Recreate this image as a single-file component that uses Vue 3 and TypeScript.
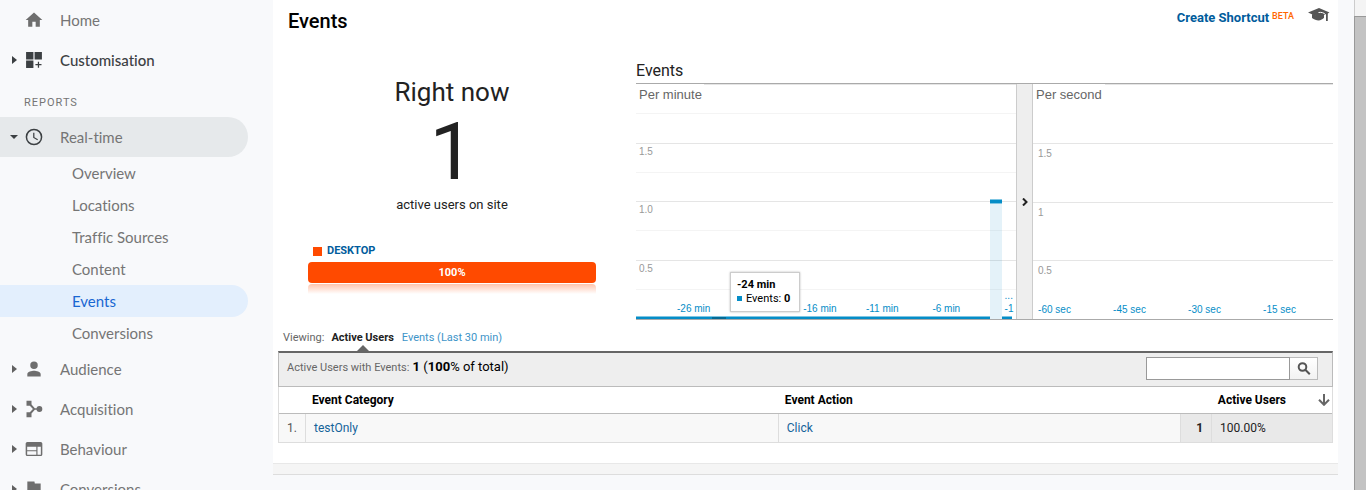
<script setup lang="ts">
interface NavItem {
  label: string
  icon: string
}

interface AxisLabel {
  text: string
  x: number
}

const subItems: string[] = ['Overview', 'Locations', 'Traffic Sources', 'Content', 'Events', 'Conversions']
const activeSub = 'Events'

const reports: NavItem[] = [
  { label: 'Audience', icon: 'M12 12a4.500 4.500 0 1 0 0-9 4.500 4.500 0 0 0 0 9zM12 14c-2.700 0-8 1.300-8 4v3h16v-3c0-2.700-5.300-4-8-4z' },
  { label: 'Acquisition', icon: 'M3 2h6v6H3zM3 16h6v6H3zM7 8l2-1.500 4 4.500h3v2h-3l-4 4.500L7 16l3.700-4zM15 12a3.500 3.500 0 1 1 7 0 3.500 3.500 0 1 1-7 0z' },
  { label: 'Behaviour', icon: 'M4 3.500h16a2 2 0 0 1 2 2v13a2 2 0 0 1-2 2H4a2 2 0 0 1-2-2v-13a2 2 0 0 1 2-2zM3.800 9.200v4.200h11V9.200zM3.800 14.800v4h11v-4zM16.200 9.200v9.600h4V9.200z' },
  { label: 'Conversions', icon: 'M13 5.500L12.500 3H4v19h3v-7h5l.5 2.500H20v-12z' },
]

const minorLines: number[] = [29, 88, 146, 205]
const minuteLines: number[] = [59, 117, 176]
const secondLines: number[] = [59, 118, 176]
const levels: string[] = ['1.5', '1.0', '0.5']
const secondLevels: string[] = ['1.5', '1', '0.5']

const minuteLabels: AxisLabel[] = [
  { text: '-26 min', x: 10.8 },
  { text: '-16 min', x: 44 },
  { text: '-11 min', x: 60.5 },
  { text: '-6 min', x: 78 },
  { text: '-1', x: 97 },
]

const secondLabels: AxisLabel[] = [
  { text: '-60 sec', x: 1.7 },
  { text: '-45 sec', x: 26.7 },
  { text: '-30 sec', x: 51.7 },
  { text: '-15 sec', x: 76.7 },
]
</script>

<template>
  <div class="page">
    <nav class="sidebar">
      <a class="item" href="#">
        <span class="caret"></span>
        <svg class="icon" viewBox="0 0 24 24"><path d="M10 20v-6h4v6h5v-8h3L12 3 2 12h3v8z" /></svg>
        Home
      </a>
      <a class="item dark" href="#">
        <svg class="caret" viewBox="0 0 8 10"><path d="M2 1l5 4-5 4z" /></svg>
        <svg class="icon" viewBox="0 0 24 24"><path d="M2.500 2.500h8.800v8.800H2.500zM12.700 2.500h8.800v8.800h-8.800zM2.500 12.700h8.800v8.800H2.500zM16.600 14h1.500v2.900H21v1.500h-2.900v2.900h-1.500v-2.900h-2.900v-1.500h2.900z" /></svg>
        Customisation
      </a>
      <h2 class="section">REPORTS</h2>
      <a class="item open" href="#">
        <svg class="caret" viewBox="0 0 8 10"><path d="M0 3h8L4 7z" /></svg>
        <svg class="icon" viewBox="0 0 24 24"><path d="M12 2a10 10 0 1 0 0 20 10 10 0 0 0 0-20zM12 20.200a8.200 8.200 0 1 1 0-16.400 8.200 8.200 0 0 1 0 16.400zM12.500 7H11v6l5 3 .8-1.300-4.300-2.500z" /></svg>
        Real-time
      </a>
      <a v-for="s in subItems" :key="s" class="sub" :class="{ active: s === activeSub }" href="#">{{ s }}</a>
      <a v-for="r in reports" :key="r.label" class="item" href="#">
        <svg class="caret" viewBox="0 0 8 10"><path d="M2 1l5 4-5 4z" /></svg>
        <svg class="icon" viewBox="0 0 24 24"><path :d="r.icon" /></svg>
        {{ r.label }}
      </a>
    </nav>

    <main class="main">
      <section class="panel">
        <header class="top">
          <h1>Events</h1>
          <div class="actions">
            <a href="#" class="shortcut">Create Shortcut</a>
            <span class="beta">BETA</span>
            <svg class="cap" viewBox="0 0 22 14">
              <path d="M11 0L0 4.500 11 9.500l7-3.200V13h1.800V5.500l1.700-1z" />
              <path d="M4 6v4c2 1.500 4.500 2.500 6.500 2.500s4.500-1.500 5.500-2.700V6l-5 2.500z" />
              <path d="M10.500 4.500c3-.5 5.500.3 6.800 2v3.500" stroke="#fff" stroke-width="1" fill="none" />
            </svg>
          </div>
        </header>

        <div class="overview">
          <div class="now">
            <div class="now-title">Right now</div>
            <div class="now-count">1</div>
            <div class="now-note">active users on site</div>
            <div class="legend"><i></i>DESKTOP</div>
            <div class="share">100%</div>
            <div class="reflection"></div>
          </div>

          <div class="charts">
            <h3>Events</h3>
            <div class="plots">
              <div class="plot minute">
                <svg width="100%" height="235">
                  <rect class="faint" x="18%" y="0" width="82%" height="1" />
                  <rect v-for="y in minorLines" :key="y" class="minor" x="0" :y="y" width="100%" height="1" />
                  <rect v-for="y in minuteLines" :key="y" class="major" x="0" :y="y" width="100%" height="1" />
                  <text class="name" x="3" y="15">Per minute</text>
                  <text v-for="(l, i) in levels" :key="l" class="level" x="3" :y="minuteLines[i] + 12">{{ l }}</text>
                  <text v-for="l in minuteLabels" :key="l.text" class="tick" :x="l.x + '%'" y="228">{{ l.text }}</text>
                  <text class="tick" x="97%" y="215">...</text>
                  <rect class="edge" x="0" y="232" width="99%" height="1" />
                  <rect class="line" x="0" y="233" width="99%" height="2" />
                  <rect class="hover" x="20%" y="233" width="3.700%" height="2" />
                  <rect fill="#fff" x="93.200%" y="232" width="3.100%" height="3" />
                  <rect class="bar" x="93.200%" y="117" width="3.100%" height="118" />
                  <rect class="edge" x="93.200%" y="115" width="3.100%" height="5" />
                  <rect class="line" x="93.200%" y="116" width="3.100%" height="3" />
                </svg>
                <div class="tip">
                  <b>-24 min</b>
                  <span><i></i>Events: <b>0</b></span>
                </div>
              </div>
              <button class="toggle" aria-label="Collapse chart">
                <svg viewBox="0 0 6 8"><path d="M1 .5L4.500 4 1 7.500" /></svg>
              </button>
              <div class="plot second">
                <svg width="100%" height="235">
                  <rect class="faint" x="24%" y="0" width="76%" height="1" />
                  <rect v-for="y in secondLines" :key="y" class="major" x="0" :y="y" width="100%" height="1" />
                  <text class="name" x="3" y="15">Per second</text>
                  <text v-for="(l, i) in secondLevels" :key="l" class="level" x="5" :y="secondLines[i] + 14">{{ l }}</text>
                  <text v-for="l in secondLabels" :key="l.text" class="tick" :x="l.x + '%'" y="229">{{ l.text }}</text>
                </svg>
              </div>
            </div>
          </div>
        </div>

        <div class="report">
          <div class="tabs">
            <span class="muted">Viewing:</span>
            <a href="#" class="tab current">Active Users</a>
            <a href="#" class="tab">Events (Last 30 min)</a>
          </div>
          <div class="toolbar">
            <div class="total"><span>Active Users with Events:</span> <b>1</b> (<b>100</b>% of total)</div>
            <form class="search" @submit.prevent>
              <input type="text" aria-label="Search events" />
              <button aria-label="Search">
                <svg viewBox="0 0 14 14"><circle cx="5.500" cy="5" r="3.800" /><path d="M8.300 7.800l4.500 4.500" /></svg>
              </button>
            </form>
          </div>
          <table>
            <colgroup>
              <col class="c-index" /><col class="c-category" /><col class="c-action" /><col class="c-count" /><col />
            </colgroup>
            <thead>
              <tr>
                <th></th>
                <th>Event Category</th>
                <th>Event Action</th>
                <th colspan="2">
                  <div class="sort">
                    Active Users
                    <svg viewBox="0 0 12 12"><path d="M6 0v10.500M1 5.800l5 5 5-5" /></svg>
                  </div>
                </th>
              </tr>
            </thead>
            <tbody>
              <tr>
                <td class="index">1.</td>
                <td><a href="#">testOnly</a></td>
                <td><a href="#">Click</a></td>
                <td class="count">1</td>
                <td class="percent">100.00%</td>
              </tr>
            </tbody>
          </table>
        </div>
        <footer class="foot"></footer>
      </section>
    </main>
    <div class="scrollbar"><div class="thumb"></div></div>
  </div>
</template>

<style>
body {
  background: #f8f9fb;
}
</style>

<style scoped>
* {
  box-sizing: border-box;
}
.page {
  display: flex;
  height: 100vh;
  overflow: hidden;
  background: #f8f9fb;
  font-family: Roboto, sans-serif;
  font-size: 12px;
  color: #222;
}
a {
  text-decoration: none;
}
h1, h2, h3 {
  margin: 0;
}
b {
  font-weight: 700;
}

/* Sidebar */
.sidebar {
  flex: 0 0 273px;
  padding-right: 25px;
  font-family: Lato, sans-serif;
  font-size: 15px;
  font-variant-ligatures: none;
}
.item {
  display: flex;
  align-items: center;
  height: 40px;
  padding-left: 10px;
  color: #757575;
}
.caret {
  width: 8px;
  height: 10px;
  margin-right: 6px;
  fill: #616161;
}
.icon {
  width: 20px;
  height: 20px;
  margin-right: 16px;
  fill: #6e6e6e;
}
.dark {
  color: #3c4043;
  font-weight: 500;
}
.dark .icon, .open .icon, .dark .caret, .open .caret {
  fill: #3c4043;
}
.open {
  background: #e6e9eb;
  border-radius: 0 20px 20px 0;
}
.section {
  height: 37px;
  padding: 15px 0 0 24px;
  font: 400 11px/16px Roboto, sans-serif;
  letter-spacing: 1px;
  color: #757575;
}
.sub {
  display: flex;
  align-items: center;
  height: 32px;
  padding-left: 72px;
  color: #757575;
}
.sub.active {
  background: #e3effd;
  color: #1967d2;
  border-radius: 0 16px 16px 0;
}

/* Panel */
.main {
  flex: 1;
  min-width: 0;
  padding-right: 16px;
}
.panel {
  background: #fff;
}
.top {
  display: flex;
  justify-content: space-between;
  height: 62px;
  padding: 8px 8px 0 15px;
}
.top h1 {
  font-size: 20px;
  line-height: 26px;
  font-weight: 500;
  color: #000;
}
.actions {
  display: flex;
  align-items: flex-start;
}
.shortcut {
  font-size: 13px;
  line-height: 20px;
  font-weight: 700;
  color: #005c9c;
}
.beta {
  margin: 0 14px 0 3px;
  font-size: 9px;
  line-height: 16px;
  font-weight: 500;
  color: #f60;
}
.cap {
  width: 22px;
  height: 14px;
  fill: #555;
}
.overview {
  display: flex;
  padding: 0 5px 0 35px;
}
.now {
  flex: 0 0 288px;
  margin-right: 40px;
  padding-top: 14px;
  text-align: center;
}
.now-title {
  font-size: 26px;
  line-height: 32px;
}
.now-count {
  font-size: 80px;
  line-height: 88px;
}
.now-note {
  font-size: 13px;
  line-height: 18px;
}
.legend {
  display: flex;
  align-items: center;
  margin-top: 28px;
  padding-left: 5px;
  line-height: 18px;
  font-size: 11px;
  font-weight: 700;
  color: #005c9c;
}
.legend i {
  width: 9px;
  height: 9px;
  margin-right: 5px;
  background: #ff4a00;
}
.share {
  margin-top: 2px;
  border-radius: 4px;
  background: #ff4a00;
  color: #fff;
  font-size: 11px;
  font-weight: 700;
  line-height: 21px;
}
.reflection {
  height: 10px;
  margin-top: 1px;
  border-radius: 4px 4px 0 0;
  background: linear-gradient(#ffc5ae, #fff);
}
.charts {
  flex: 1;
  min-width: 0;
}
.charts h3 {
  font-size: 16px;
  line-height: 18px;
  padding-bottom: 3px;
  font-weight: 400;
}
.plots {
  display: flex;
  border: solid #aaa;
  border-width: 1px 0;
}
.plot {
  position: relative;
  min-width: 0;
  height: 235px;
  font-family: "Liberation Sans", Arial, sans-serif;
}
.plot svg {
  display: block;
}
.minute {
  flex: 380;
}
.second {
  flex: 300;
}
rect {
  shape-rendering: crispEdges;
}
.faint, .major {
  fill: #e5e5e5;
}
.minor {
  fill: #f4f4f4;
}
.line {
  fill: #058dc7;
}
.edge {
  fill: #7fc6e3;
}
.hover {
  fill: #046a95;
}
.bar {
  fill: #058dc7;
  opacity: .11;
}
.name {
  font-size: 13px;
  fill: #666;
}
.level {
  font-size: 10px;
  fill: #999;
}
.tick {
  font-size: 10px;
  fill: #058dc7;
}
.tip {
  position: absolute;
  left: 94px;
  top: 188px;
  display: grid;
  width: 70px;
  padding: 5px 6px;
  border: 1px solid #ccc;
  background: #fff;
  box-shadow: 0 0 2px #bbb;
  font: 11px/14px Roboto, sans-serif;
  color: #000;
  white-space: nowrap;
}
.tip i {
  display: inline-block;
  width: 5px;
  height: 5px;
  margin-right: 4px;
  vertical-align: 1px;
  background: #058dc7;
}
.toggle {
  flex: 0 0 17px;
  display: flex;
  align-items: center;
  justify-content: center;
  padding: 0;
  border: solid #ccc;
  border-width: 0 1px;
  background: #eee;
}
.toggle svg {
  width: 6px;
  height: 8px;
  fill: none;
  stroke: #222;
  stroke-width: 2;
}

/* Report table */
.report {
  padding: 7px 5px 20px;
}
.tabs {
  display: flex;
  gap: 7px;
  height: 24px;
  padding-left: 5px;
  font-size: 11px;
  line-height: 22px;
}
.muted {
  color: #666;
}
.tab {
  margin-right: 1px;
  color: #3d94c8;
}
.current {
  position: relative;
  font-weight: 700;
  color: #222;
}
.current::after {
  content: "";
  position: absolute;
  left: 50%;
  bottom: 0;
  margin-left: -6px;
  border: 6px solid transparent;
  border-top: 0;
  border-bottom-color: #666;
}
.toolbar {
  display: flex;
  justify-content: space-between;
  height: 36px;
  padding: 4px 14px 0 8px;
  border: 1px solid #bbb;
  border-width: 2px 1px 1px;
  border-top-color: #666;
  background: #eee;
}
.total {
  font-size: 13px;
  line-height: 20px;
  color: #000;
}
.total span {
  font-size: 11px;
  color: #666;
}
.search {
  display: flex;
  height: 23px;
}
.search input {
  width: 144px;
  padding: 0 4px;
  border: 1px solid #999;
  border-radius: 0;
  background: #fff;
}
.search button {
  width: 28px;
  padding: 0;
  display: flex;
  align-items: center;
  justify-content: center;
  border: 1px solid #bbb;
  border-left: 0;
  background: linear-gradient(#fff, #f2f2f2);
}
.search svg {
  width: 14px;
  height: 14px;
  fill: none;
  stroke: #555;
  stroke-width: 2;
}
table {
  width: 100%;
  table-layout: fixed;
  border-collapse: separate;
  border-spacing: 0;
  border: 1px solid #ddd;
  border-top: 0;
}
.c-index { width: 27px; }
.c-category { width: 44.9%; }
.c-action { width: 38.2%; }
.c-count { width: 31px; }
th {
  height: 27px;
  padding: 0 6px;
  border-bottom: 1px solid #bbb;
  text-align: left;
  font-size: 12px;
  font-weight: 700;
  color: #000;
}
.sort {
  display: flex;
  align-items: center;
  justify-content: flex-end;
  gap: 32px;
  margin-right: -4px;
}
.sort svg {
  width: 12px;
  height: 12px;
  fill: none;
  stroke: #666;
  stroke-width: 2;
}
td {
  height: 28px;
  padding: 0 8px;
  border-right: 1px solid #ddd;
  background: #f8f8f8;
  font-size: 12px;
}
td:last-child {
  border-right: 0;
}
td a {
  color: #15639a;
}
.index {
  padding: 0 0 0 8px;
  color: #555;
}
.count {
  text-align: right;
  font-weight: 700;
  background: #e9e9e9;
}
.percent {
  background: #e9e9e9;
}
.foot {
  height: 12px;
  border: solid #e8e8e8;
  border-width: 1px 0;
  border-bottom-color: #ddd;
  background: #f5f5f5;
}

/* Scroll indicator */
.scrollbar {
  flex: 0 0 12px;
  padding-top: 16px;
  border-left: 1px solid #ccc;
  background: #f4f4f4;
}
.thumb {
  height: 100%;
  margin-left: -1px;
  border: solid #999;
  border-width: 1px 0 0 1px;
  background: #c3c3c3;
}
</style>
